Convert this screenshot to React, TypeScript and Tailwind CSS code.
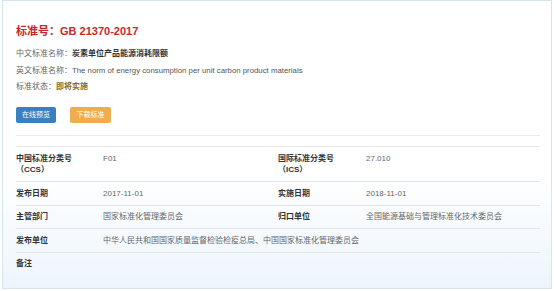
import React from "react";

const font = { fontFamily: '"Liberation Sans", "Noto Sans CJK SC", sans-serif' };

function Row({ children }: { children: React.ReactNode }) {
  return (
    <div className="grid grid-cols-[87px_175px_88px_1fr] border-t border-[#e2e6ea]">
      {children}
    </div>
  );
}

function Label({ children }: { children: React.ReactNode }) {
  return <div className="py-[5.5px] font-bold text-[#333]">{children}</div>;
}
function Value({ children, span }: { children?: React.ReactNode; span?: boolean }) {
  return <div className={`py-[5.5px] text-[#666] ${span ? "col-span-3" : ""}`}>{children}</div>;
}

export default function App() {
  return (
    <div className="w-[554px] h-[291px] bg-white" style={font}>
      <div className="ml-[2px] w-[550px] h-[289px] border border-[#d6e5f1] bg-gradient-to-b from-white from-60% to-[#edf5fc] pl-[13px] pr-[11px] pt-[23px]">
        <div className="text-[11px] leading-[14px] font-bold text-[#c7282c]">标准号：GB 21370-2017</div>
        <div className="mt-[8px] text-[8px] leading-[16.5px] text-[#666]">
          <div>
            中文标准名称：<span className="font-bold text-[#333]">炭素单位产品能源消耗限额</span>
          </div>
          <div>
            英文标准名称：<span className="text-[#555] text-[7.8px]">The norm of energy consumption per unit carbon product materials</span>
          </div>
          <div>
            标准状态：<span className="font-bold text-[#8a6a1f]">即将实施</span>
          </div>
        </div>
        <div className="mt-[11.5px] flex gap-[14px]">
          <div className="w-[40px] h-[16px] rounded-[2px] bg-[#3a7fc0] text-white text-[7px] leading-[16px] text-center">在线预览</div>
          <div className="w-[41px] h-[16px] rounded-[2px] bg-[#f0ad4e] text-white text-[7px] leading-[16px] text-center">下载标准</div>
        </div>
        <div className="mt-[12px] h-px bg-[#e8eaed]" />
        <div className="mt-[10px] text-[8px] leading-[11.5px]">
          <Row>
            <Label>
              中国标准分类号
              <br />（CCS）
            </Label>
            <Value>F01</Value>
            <Label>
              国际标准分类号
              <br />（ICS）
            </Label>
            <Value>27.010</Value>
          </Row>
          <Row>
            <Label>发布日期</Label>
            <Value>2017-11-01</Value>
            <Label>实施日期</Label>
            <Value>2018-11-01</Value>
          </Row>
          <Row>
            <Label>主管部门</Label>
            <Value>国家标准化管理委员会</Value>
            <Label>归口单位</Label>
            <Value>全国能源基础与管理标准化技术委员会</Value>
          </Row>
          <Row>
            <Label>发布单位</Label>
            <Value span>中华人民共和国国家质量监督检验检疫总局、中国国家标准化管理委员会</Value>
          </Row>
          <Row>
            <Label>备注</Label>
            <Value span></Value>
          </Row>
        </div>
      </div>
    </div>
  );
}
